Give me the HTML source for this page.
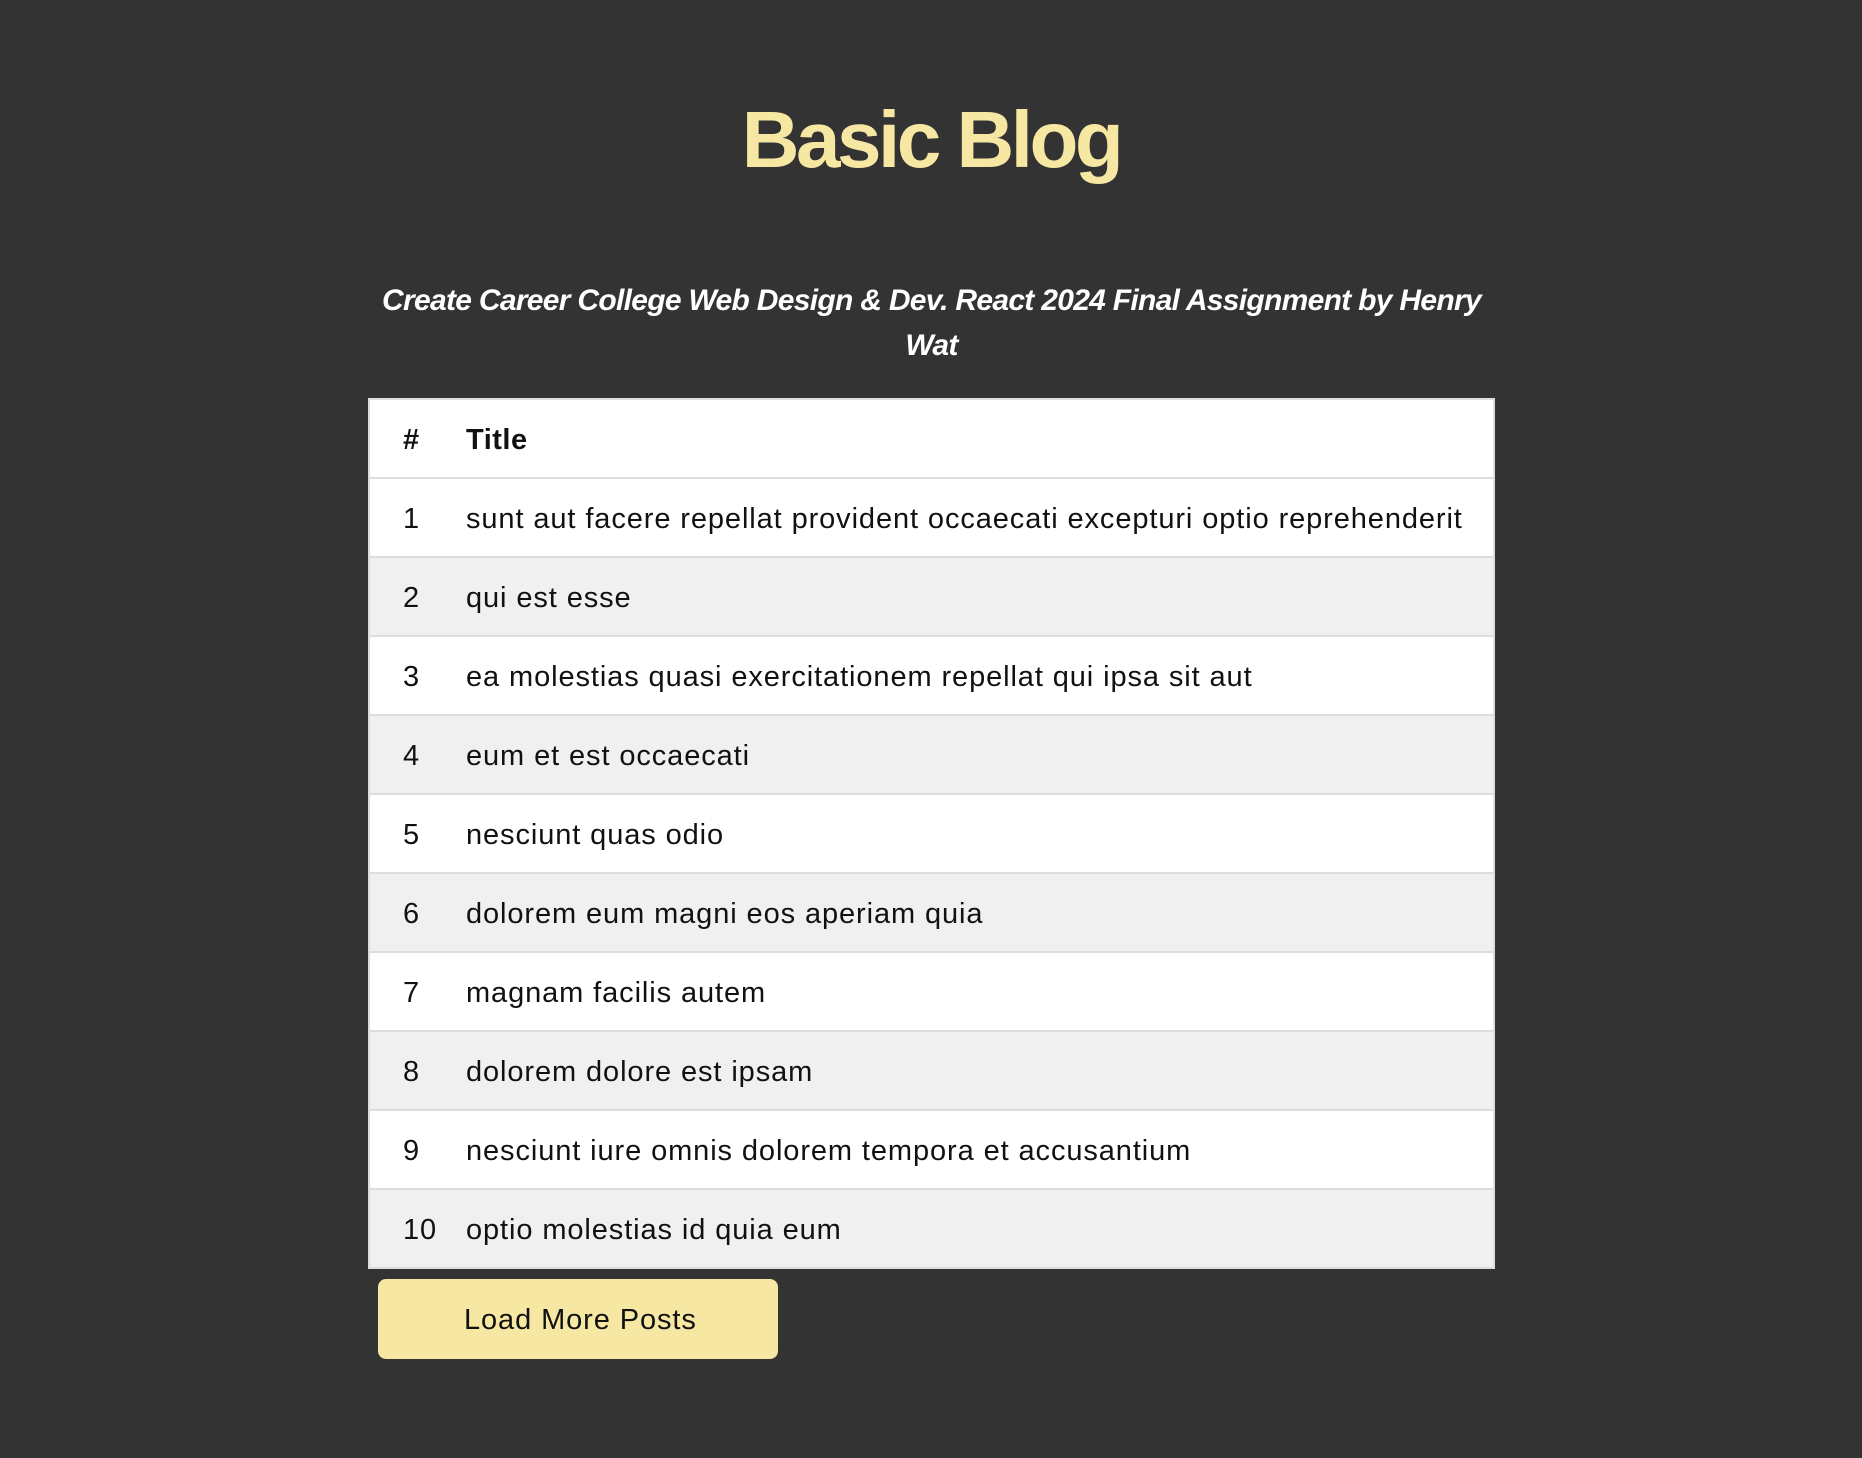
<!DOCTYPE html>
<html><head><style>
body{margin:0;background:#333;width:1862px;height:1458px;overflow:hidden;font-family:"Liberation Sans",sans-serif}
h1{position:absolute;top:90px;left:0;width:1862px;text-align:center;margin:0;font-size:80px;line-height:100px;color:#f6e8a3;font-weight:bold;letter-spacing:-3.5px}
.sub{position:absolute;top:278px;left:368px;width:1127px;text-align:center;color:#fff;font-weight:bold;font-style:italic;font-size:30px;line-height:45px;letter-spacing:-0.7px}
table{position:absolute;top:398px;left:368px;width:1127px;border-collapse:collapse;border:2px solid #ddd;background:#fff;font-size:29px;letter-spacing:0.9px;color:#111}
td,th{height:79px;border-bottom:2px solid #ddd;padding:3px 0 0 0;box-sizing:border-box;text-align:left}
th{font-weight:bold;letter-spacing:0.5px}
td:first-child,th:first-child{width:97px;padding-left:33px}
tr:nth-child(odd) td{background:#f0f0f0}
tr:last-child td{border-bottom:none}
.btn{position:absolute;left:378px;top:1279px;width:400px;height:80px;background:#f6e8a3;border-radius:8px;font-size:29px;letter-spacing:0.9px;line-height:82px;padding-left:86px;box-sizing:border-box;color:#111}
</style></head><body>
<h1>Basic Blog</h1>
<div class="sub">Create Career College Web Design &amp; Dev. React 2024 Final Assignment by Henry Wat</div>
<table>
<tr><th>#</th><th>Title</th></tr>
<tr><td>1</td><td>sunt aut facere repellat provident occaecati excepturi optio reprehenderit</td></tr>
<tr><td>2</td><td>qui est esse</td></tr>
<tr><td>3</td><td>ea molestias quasi exercitationem repellat qui ipsa sit aut</td></tr>
<tr><td>4</td><td>eum et est occaecati</td></tr>
<tr><td>5</td><td>nesciunt quas odio</td></tr>
<tr><td>6</td><td>dolorem eum magni eos aperiam quia</td></tr>
<tr><td>7</td><td>magnam facilis autem</td></tr>
<tr><td>8</td><td>dolorem dolore est ipsam</td></tr>
<tr><td>9</td><td>nesciunt iure omnis dolorem tempora et accusantium</td></tr>
<tr><td>10</td><td>optio molestias id quia eum</td></tr>
</table>
<div class="btn">Load More Posts</div>
</body></html>
